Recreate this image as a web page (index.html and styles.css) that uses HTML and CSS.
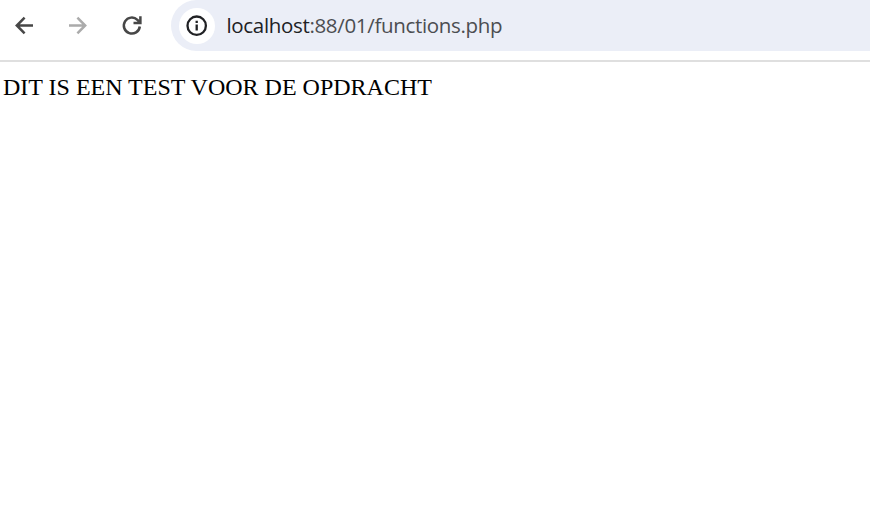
FILE: index.html
```html
<!DOCTYPE html>
<html lang="nl">
<head>
<meta charset="utf-8">
<title>functions.php</title>
<link rel="stylesheet" href="styles.css">
</head>
<body>
<header class="toolbar">
  <nav class="controls">
    <svg class="icon" viewBox="0 0 24 24"><path d="M21 11.500H5M12.600 3.700L4.800 11.500l7.800 7.800"/></svg>
    <svg class="icon disabled" viewBox="0 0 24 24"><path d="M3 11.500H19M11.400 3.700l7.800 7.800-7.800 7.800"/></svg>
    <svg class="icon" viewBox="0 0 24 24"><path d="M19.800 12.500A8 8 0 1 1 17.400 5.800L20 8.400M20.400 2.200v6.900h-6.900"/></svg>
  </nav>
  <div class="omnibox">
    <span class="site-info"><svg class="info" viewBox="0 0 22 22"><circle cx="10.700" cy="10.700" r="9.200"/><path d="M10.700 9.500v6M10.700 5.700v2.300"/></svg></span>
    <span class="url"><span class="host">localhost</span>:88/01/functions.php</span>
  </div>
</header>
<main class="page">DIT IS EEN TEST VOOR DE OPDRACHT</main>
</body>
</html>
```
FILE: styles.css
```css
body { margin: 0; background: #fff; }
.toolbar { box-sizing: border-box; height: 62px; display: flex; align-items: flex-start; border-bottom: 2px solid #dfdfdf; }
.controls { display: flex; gap: 30px; padding: 14px 0 0 12px; width: 159px; }
.icon { width: 24px; height: 24px; flex: none; fill: none; stroke: #474747; stroke-width: 2.500; }
.disabled { stroke: #ababab; }
.omnibox { flex: 1; height: 51px; display: flex; align-items: center; background: #ebeef7; border-radius: 26px 0 0 26px; }
.site-info { width: 36px; height: 36px; margin-left: 8px; border-radius: 50%; background: #fff; display: flex; align-items: center; justify-content: center; }
.info { width: 22px; height: 22px; fill: none; stroke: #202124; stroke-width: 2.300; }
.url { margin-left: 11.500px; padding-bottom: 2px; font: 20.500px/28px "Open Sans", sans-serif; letter-spacing: -0.330px; color: #4b4d51; }
.host { color: #202124; }
.page { padding: 11px 3px; font: 24px/28px "Liberation Serif", serif; color: #000; }
```
